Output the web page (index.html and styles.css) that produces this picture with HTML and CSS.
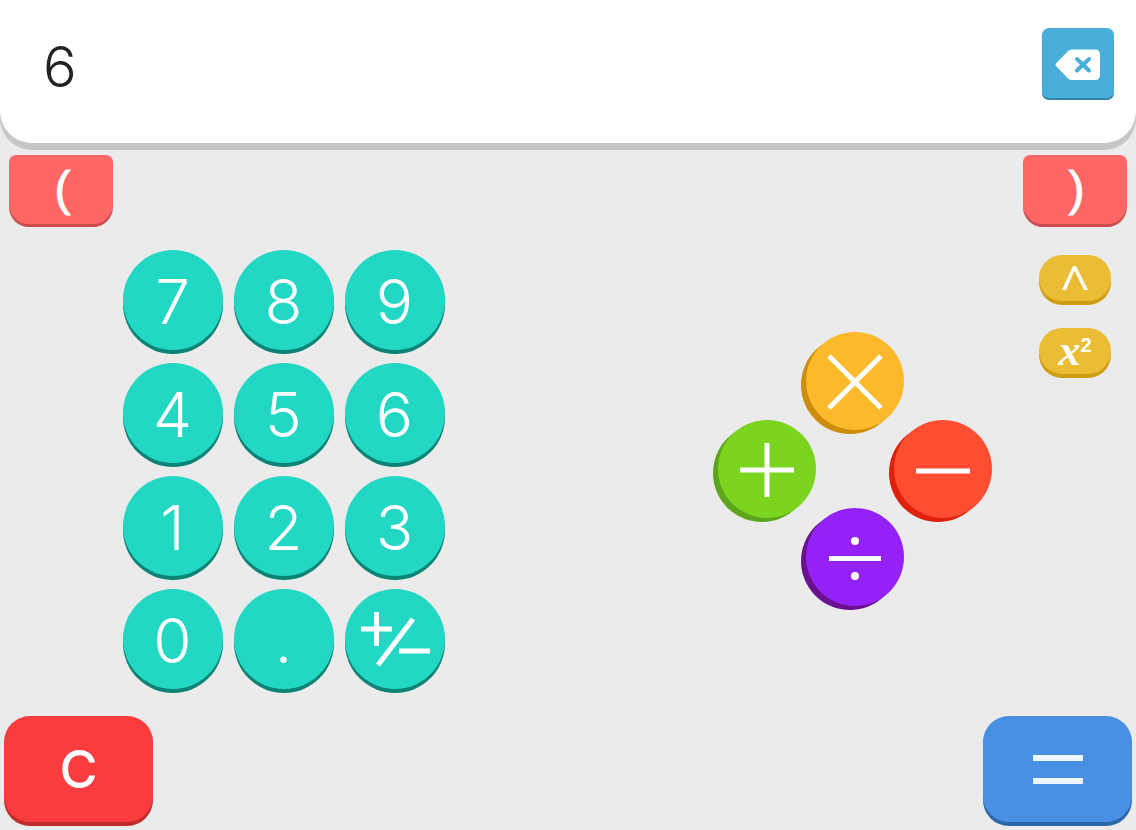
FILE: index.html
```
<!DOCTYPE html>
<html lang="en">
<head>
    <meta charset="UTF-8">
    <meta name="viewport" content="width=device-width, initial-scale=1.0">
    <title>Calculator</title>
    <link rel="stylesheet" href="styles.css">
</head>
<body>
    <header class="display">
        <input class="display-value" type="text" value="6" aria-label="Result" readonly>
        <button class="key backspace" aria-label="Delete">
            <svg width="46" height="32" viewBox="0 0 46 32">
                <path d="M1 14.5 L13 2 Q14.5 .5 17 .5 H40 Q45 .5 45 6 V25.500 Q45 31 40 31 H17 Q14.500 31 13 29.500 L1 17 Q0 15.700 1 14.500 Z" fill="#fff"/>
                <path d="M22 10 L34 21.500 M34 10 L22 21.500" stroke="#4aaedb" stroke-width="4" stroke-linecap="round"/>
            </svg>
        </button>
    </header>

    <main class="calculator">
        <div class="row">
            <button class="key paren">(</button>
            <button class="key paren">)</button>
        </div>

        <div class="middle">
            <div class="numbers">
                <button class="key number">7</button>
                <button class="key number">8</button>
                <button class="key number">9</button>
                <button class="key number">4</button>
                <button class="key number">5</button>
                <button class="key number">6</button>
                <button class="key number">1</button>
                <button class="key number">2</button>
                <button class="key number">3</button>
                <button class="key number">0</button>
                <button class="key number">.</button>
                <button class="key number" aria-label="Change sign">
                    <svg width="72" height="56" viewBox="0 0 72 56">
                        <path d="M2 17 H33 M17.500 0 V34 M40 39 H71" stroke="#fff" stroke-width="5"/>
                        <path d="M19 53 L54 7" stroke="#fff" stroke-width="5"/>
                    </svg>
                </button>
            </div>

            <div class="operators">
                <button class="key operator multiply" aria-label="Multiply">
                    <svg width="56" height="56" viewBox="0 0 56 56">
                        <path d="M2 2 L54 54 M54 2 L2 54" stroke="#fff" stroke-width="5"/>
                    </svg>
                </button>
                <button class="key operator plus" aria-label="Add">
                    <svg width="56" height="56" viewBox="0 0 56 56">
                        <path d="M1 28 H55 M28 1 V55" stroke="#fff" stroke-width="5"/>
                    </svg>
                </button>
                <button class="key operator minus" aria-label="Subtract">
                    <svg width="56" height="56" viewBox="0 0 56 56">
                        <path d="M1 29 H55" stroke="#fff" stroke-width="5"/>
                    </svg>
                </button>
                <button class="key operator divide" aria-label="Divide">
                    <svg width="56" height="56" viewBox="0 0 56 56">
                        <path d="M2 28.500 H54" stroke="#fff" stroke-width="5"/>
                        <circle cx="28" cy="11" r="4" fill="#fff"/>
                        <circle cx="28" cy="46" r="4" fill="#fff"/>
                    </svg>
                </button>
            </div>

            <div class="functions">
                <button class="key function" aria-label="Power">
                    <svg width="28" height="24" viewBox="0 0 28 24">
                        <path d="M1 24 L12 0 H15 L27 24 H23 L13.500 4.500 L5 24 Z" fill="#fff"/>
                    </svg>
                </button>
                <button class="key function square">x<sup>2</sup></button>
            </div>
        </div>

        <div class="row bottom">
            <button class="key clear">C</button>
            <button class="key equals" aria-label="Equals">
                <svg width="50" height="30" viewBox="0 0 50 30">
                    <path d="M0 4 H50 M0 27 H50" stroke="#edf5ff" stroke-width="6"/>
                </svg>
            </button>
        </div>
    </main>
</body>
</html>
```

FILE: styles.css
```
* {
    margin: 0;
    padding: 0;
    box-sizing: border-box;
}

body {
    min-height: 100vh;
    display: flex;
    flex-direction: column;
    font-family: Inter, "Liberation Sans", sans-serif;
    background-color: #ebebeb;
}

/* Display */
.display {
    display: flex;
    align-items: center;
    justify-content: space-between;
    margin-bottom: 7px;
    padding: 28px 22px 43px 43px;
    background-color: white;
    border-radius: 0 0 32px 32px;
    box-shadow: 0 7px 0 #c8c5c5;
}

.display-value {
    flex: 1;
    min-width: 0;
    height: 72px;
    padding-top: 5px;
    border: none;
    outline: none;
    background: none;
    color: #222;
    font-family: inherit;
    font-size: 56px;
    font-weight: 300;
}

/* Keys */
.key {
    display: flex;
    align-items: center;
    justify-content: center;
    border: none;
    color: white;
    font-family: inherit;
    cursor: pointer;
}

.backspace {
    width: 72px;
    height: 70px;
    margin-bottom: 2px;
    padding-top: 3px;
    background-color: #4aaedb;
    border-radius: 7px;
    box-shadow: 0 2px 0 #3583a8;
}

.calculator {
    flex: 1;
    display: flex;
    flex-direction: column;
    padding: 5px 4px 4px;
}

.row {
    display: flex;
    justify-content: space-between;
    padding: 0 5px 3px;
}

.paren {
    width: 104px;
    height: 69px;
    padding: 0 0 2px 3px;
    background-color: #ff6767;
    border-radius: 7px 7px 20px 20px;
    box-shadow: 0 3px 0 #cb4d50;
    font-family: "Liberation Sans", Arial, sans-serif;
    font-size: 48px;
    -webkit-text-stroke: 1px white;
}

.middle {
    flex: 1;
    display: grid;
    grid-template-columns: 1fr 1fr;
    align-items: center;
}

/* Number pad */
.numbers {
    justify-self: center;
    display: grid;
    grid-template-columns: repeat(3, 100px);
    gap: 13px 11px;
    padding: 0 5px 4px 0;
}

.number {
    height: 100px;
    padding-top: 2px;
    background-color: #22d8c4;
    border-radius: 50%;
    box-shadow: 0 4px 0 #0b8375;
    font-size: 62px;
    font-weight: 300;
}

/* Operators, placed as a diamond */
.operators {
    grid-area: 1 / 2;
    justify-self: center;
    display: grid;
    grid-template-columns: repeat(3, 88px);
    grid-template-rows: repeat(3, 88px);
    place-items: center;
    padding: 0 0 6px 9px;
}

.operator {
    width: 98px;
    height: 98px;
    padding-top: 2px;
    border-radius: 50%;
}

.multiply {
    grid-area: 1 / 2;
    background-color: #fbb92b;
    box-shadow: -5px 4px 0 #cb8d0b;
}

.plus {
    grid-area: 2 / 1;
    background-color: #7bd51f;
    box-shadow: -5px 4px 0 #5da51d;
}

.minus {
    grid-area: 2 / 3;
    background-color: #ff4d32;
    box-shadow: -5px 4px 0 #df200b;
}

.divide {
    grid-area: 3 / 2;
    background-color: #9421f5;
    box-shadow: -5px 4px 0 #69118f;
}

/* Power and square */
.functions {
    grid-area: 1 / 2;
    justify-self: end;
    align-self: start;
    display: flex;
    flex-direction: column;
    gap: 27px;
    padding: 28px 21px 0 0;
}

.function {
    width: 72px;
    height: 46px;
    background-color: #eabd35;
    border-radius: 24px;
    box-shadow: 0 4px 0 #d09e15;
}

.square {
    font-family: "Liberation Serif", serif;
    font-size: 44px;
    font-style: italic;
    font-weight: bold;
    line-height: 40px;
}

.square sup {
    align-self: flex-start;
    font-family: "Liberation Sans", sans-serif;
    font-size: 20px;
    font-style: normal;
    line-height: 34px;
}

/* Bottom row */
.bottom {
    padding: 0 0 4px;
}

.clear,
.equals {
    width: 149px;
    height: 106px;
    border-radius: 26px;
}

.clear {
    background-color: #fb3c3f;
    box-shadow: 0 4px 0 #c12c2d;
    font-size: 52px;
    font-weight: 500;
}

.equals {
    background-color: #4990e4;
    box-shadow: 0 4px 0 #2b66a8;
}
```
